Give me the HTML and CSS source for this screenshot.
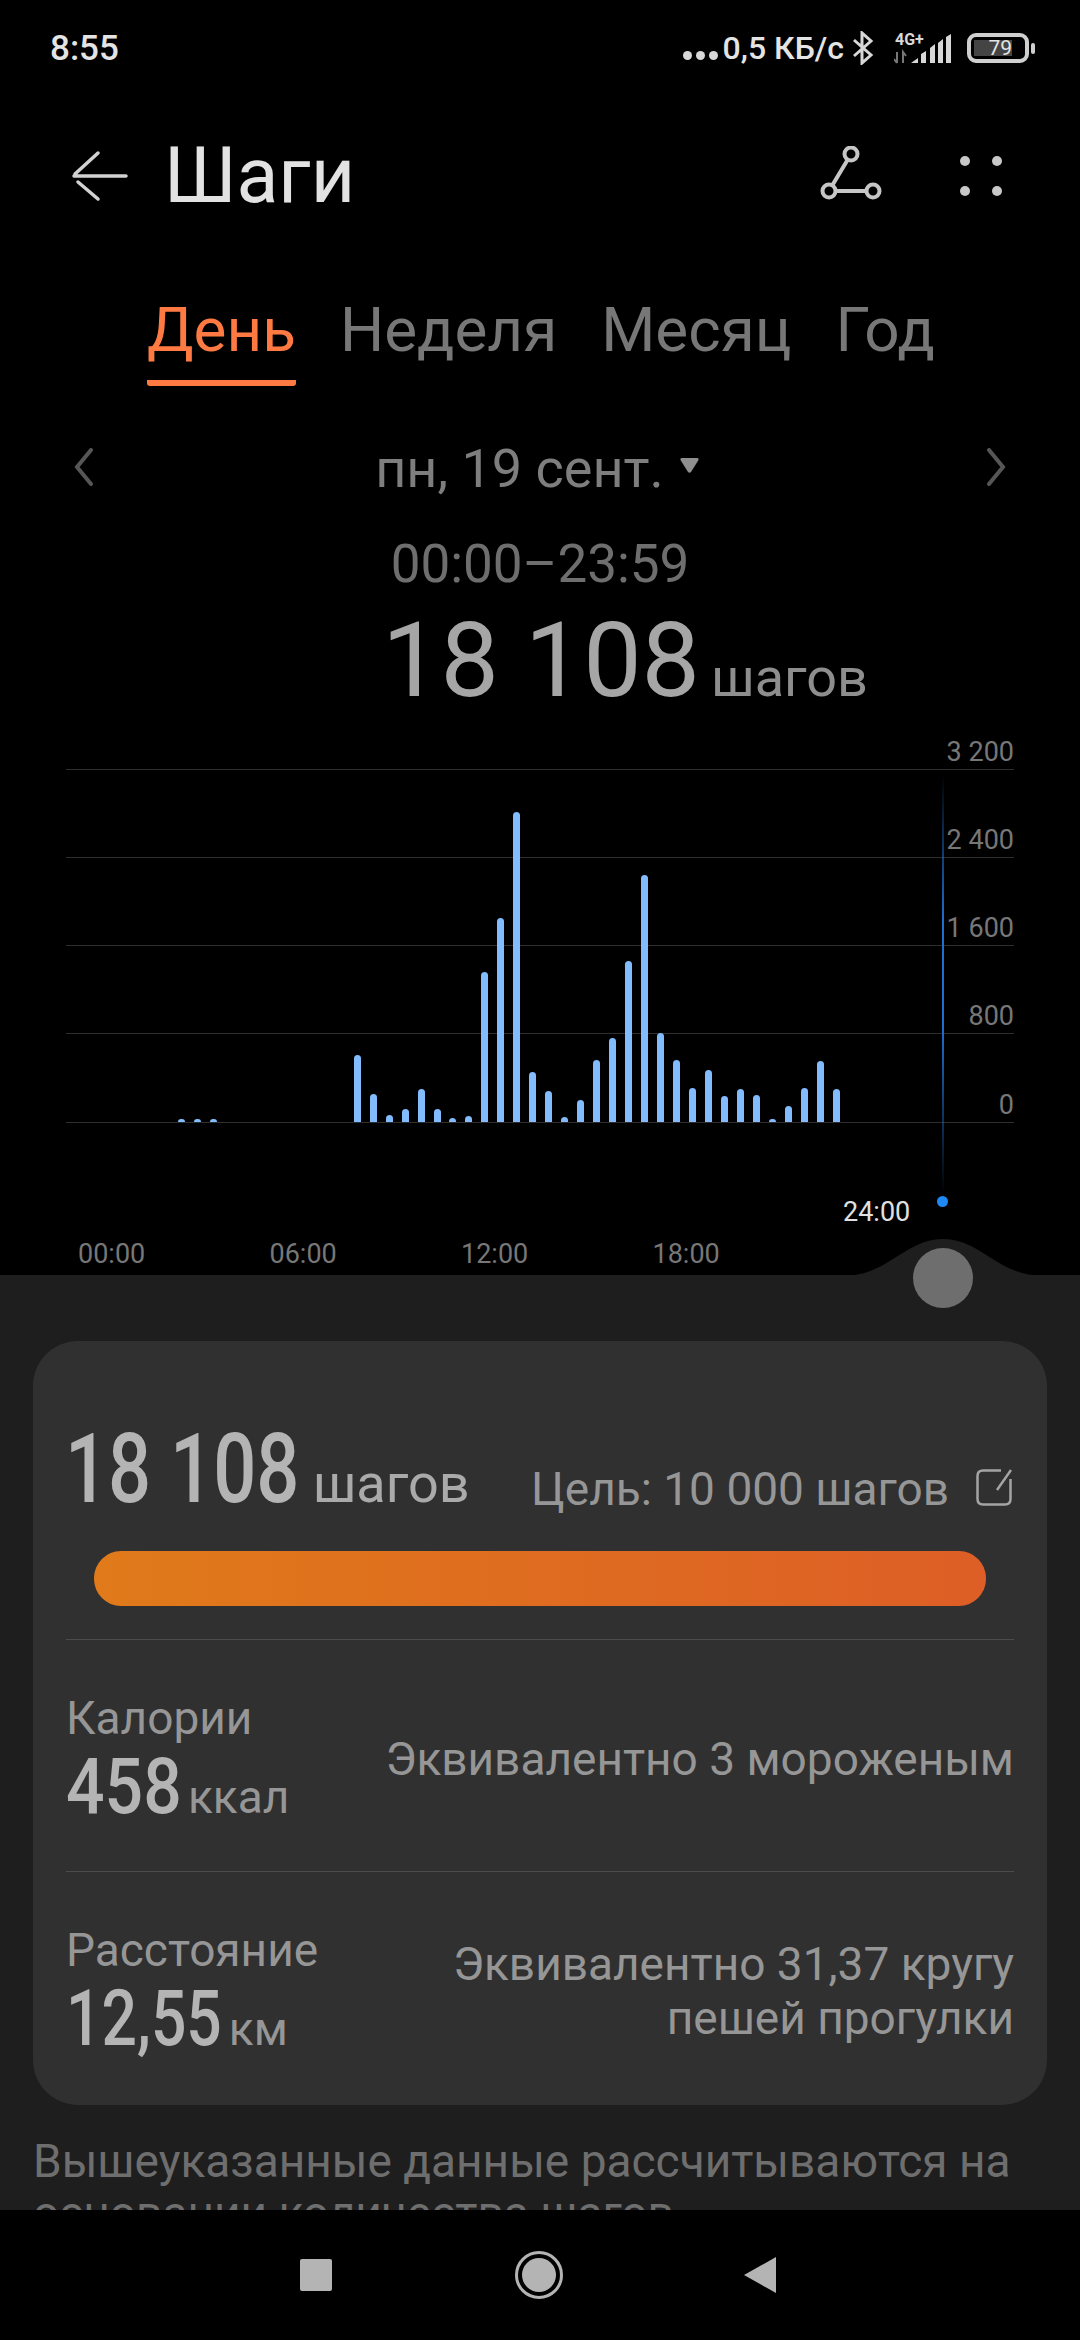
FILE: index.html
```html
<!DOCTYPE html>
<html lang="ru">
<head>
    <meta charset="UTF-8">
    <meta name="viewport" content="width=device-width, initial-scale=1.0">
    <title>Шаги</title>
    <link rel="stylesheet" href="styles.css">
</head>
<body>
    <div class="screen">
        <div class="top">
            <div class="status-bar">
                <span class="clock">8:55</span>
                <div class="status-right">
                    <span class="status-dots"><i></i><i></i><i></i></span>
                    <span class="net-speed">0,5 КБ/с</span>
                    <svg class="bt-icon" width="22" height="34" viewBox="0 0 22 34"><path d="M2 9 L19 24 L10 32 V2 L19 10 L2 25" fill="none" stroke="#d8d8d8" stroke-width="3"/></svg>
                    <div class="signal">
                        <span class="signal-label">4G+</span>
                        <svg width="58" height="31" viewBox="0 0 58 31"><path d="M3 19v11M0 26l3 4M9 30V19l3 4" stroke="#777" stroke-width="2" fill="none"/><path d="M17 30l7-5v5zM27 30V21l5-3V30zM36 30V15l5-4V30zM44 30V10l5-4V30zM52 30V4l5-3V30z" fill="#d8d8d8"/></svg>
                    </div>
                    <div class="battery"><div class="battery-level">79</div></div>
                    <div class="battery-nub"></div>
                </div>
            </div>

            <div class="app-header">
                <svg class="back-icon" width="58" height="52" viewBox="0 0 58 52"><path d="M28 3 L5 24 M4 26 H56 M8 32 L28 49" fill="none" stroke="#d2d2d2" stroke-width="3.5" stroke-linecap="round"/></svg>
                <h1 class="title">Шаги</h1>
                <svg class="share-icon" width="66" height="60" viewBox="0 0 66 60"><g fill="none" stroke="#c6c6c6" stroke-width="4"><circle cx="33" cy="8" r="6.5"/><circle cx="11" cy="45" r="6.5"/><circle cx="55" cy="45" r="6.5"/><path d="M29.500 14 L14.500 39 M17.500 45 H48.500"/></g></svg>
                <div class="more-icon"><i></i><i></i><i></i><i></i></div>
            </div>

            <div class="tabs">
                <div class="tab active">День</div>
                <div class="tab">Неделя</div>
                <div class="tab">Месяц</div>
                <div class="tab">Год</div>
            </div>

            <div class="date-row">
                <svg class="date-arrow" width="20" height="38" viewBox="0 0 20 38"><path d="M17 2 L3 19 L17 36" fill="none" stroke="#565656" stroke-width="4" stroke-linecap="round"/></svg>
                <div class="date-label">пн, 19 сент.<svg class="date-caret" width="19" height="15" viewBox="0 0 19 15"><path d="M2 0 H17 Q19 0 18.500 2 L11 14 Q9.500 15.500 8 14 L.500 2 Q0 0 2 0 Z" fill="#8f8f8f"/></svg></div>
                <svg class="date-arrow" width="20" height="38" viewBox="0 0 20 38"><path d="M3 2 L17 19 L3 36" fill="none" stroke="#565656" stroke-width="4" stroke-linecap="round"/></svg>
            </div>

            <div class="range">00:00–23:59</div>
            <div class="total"><span class="total-num">18 108</span><span class="total-unit">шагов</span></div>

            <div class="chart">
                <div class="grid-row"><span>3 200</span></div>
                <div class="grid-row"><span>2 400</span></div>
                <div class="grid-row"><span>1 600</span></div>
                <div class="grid-row"><span>800</span></div>
                <div class="grid-row"><span>0</span></div>

                <div class="bars">
                    <div class="bar" style="height: 3px"></div>
                    <div class="bar" style="height: 3px"></div>
                    <div class="bar" style="height: 3px"></div>
                    <div class="bar" style="height: 0"></div>
                    <div class="bar" style="height: 0"></div>
                    <div class="bar" style="height: 0"></div>
                    <div class="bar" style="height: 0"></div>
                    <div class="bar" style="height: 0"></div>
                    <div class="bar" style="height: 0"></div>
                    <div class="bar" style="height: 0"></div>
                    <div class="bar" style="height: 0"></div>
                    <div class="bar" style="height: 67px"></div>
                    <div class="bar" style="height: 28px"></div>
                    <div class="bar" style="height: 7px"></div>
                    <div class="bar" style="height: 13px"></div>
                    <div class="bar" style="height: 33px"></div>
                    <div class="bar" style="height: 13px"></div>
                    <div class="bar" style="height: 4px"></div>
                    <div class="bar" style="height: 6px"></div>
                    <div class="bar" style="height: 150px"></div>
                    <div class="bar" style="height: 204px"></div>
                    <div class="bar" style="height: 310px"></div>
                    <div class="bar" style="height: 50px"></div>
                    <div class="bar" style="height: 31px"></div>
                    <div class="bar" style="height: 5px"></div>
                    <div class="bar" style="height: 22px"></div>
                    <div class="bar" style="height: 62px"></div>
                    <div class="bar" style="height: 84px"></div>
                    <div class="bar" style="height: 161px"></div>
                    <div class="bar" style="height: 247px"></div>
                    <div class="bar" style="height: 89px"></div>
                    <div class="bar" style="height: 62px"></div>
                    <div class="bar" style="height: 34px"></div>
                    <div class="bar" style="height: 52px"></div>
                    <div class="bar" style="height: 26px"></div>
                    <div class="bar" style="height: 33px"></div>
                    <div class="bar" style="height: 27px"></div>
                    <div class="bar" style="height: 3px"></div>
                    <div class="bar" style="height: 16px"></div>
                    <div class="bar" style="height: 34px"></div>
                    <div class="bar" style="height: 61px"></div>
                    <div class="bar" style="height: 33px"></div>
                </div>

                <div class="cursor-line"></div>
                <div class="cursor-dot"></div>
                <div class="cursor-time">24:00</div>
            </div>

            <div class="time-axis">
                <span>00:00</span>
                <span>06:00</span>
                <span>12:00</span>
                <span>18:00</span>
            </div>
        </div>

        <div class="sheet">
            <svg class="sheet-bump" width="200" height="38" viewBox="0 0 200 38"><path d="M0 38 C45 38 62 1 100 1 C138 1 155 38 200 38 Z" fill="#1e1e1e"/></svg>
            <div class="knob"></div>

            <div class="card">
                <div class="goal-row">
                    <div><span class="big-num">18 108</span><span class="big-unit">шагов</span></div>
                    <div class="goal">
                        <span>Цель: 10 000 шагов</span>
                        <svg class="goal-edit" width="36" height="37" viewBox="0 0 36 37"><path d="M25 1.500 H7 Q1.500 1.500 1.500 7 V30 Q1.500 35.500 7 35.500 H29 Q34.500 35.500 34.500 30 V10" fill="none" stroke="#a4a4a4" stroke-width="2.500"/><path d="M35 1 L21 21" fill="none" stroke="#a4a4a4" stroke-width="2.500"/></svg>
                    </div>
                </div>
                <div class="progress"></div>

                <div class="stat">
                    <div>
                        <div class="stat-label">Калории</div>
                        <div class="stat-value"><span class="stat-num">458</span><span class="stat-unit">ккал</span></div>
                    </div>
                    <div class="stat-note">Эквивалентно 3 мороженым</div>
                </div>

                <div class="stat">
                    <div>
                        <div class="stat-label">Расстояние</div>
                        <div class="stat-value"><span class="stat-num stat-num-long">12,55</span><span class="stat-unit">км</span></div>
                    </div>
                    <div class="stat-note">Эквивалентно 31,37 кругу<br>пешей прогулки</div>
                </div>
            </div>

            <p class="footnote">Вышеуказанные данные рассчитываются на основании количества шагов.</p>
        </div>

        <div class="nav-bar">
            <div class="nav-square"></div>
            <div class="nav-home"><div class="nav-home-inner"></div></div>
            <svg width="32" height="36" viewBox="0 0 32 36"><path d="M32 0 V36 L0 18 Z" fill="#b4b4b4"/></svg>
        </div>
    </div>
</body>
</html>
```

FILE: styles.css
```css
* {
    box-sizing: border-box;
}

body {
    margin: 0;
    font-family: Roboto, "Noto Sans", sans-serif;
    background-color: #000;
}

.screen {
    width: 1080px;
    height: 2340px;
    display: flex;
    flex-direction: column;
    overflow: hidden;
    background-color: #000;
}

.top {
    height: 1275px;
    flex-shrink: 0;
}

/* status bar */
.status-bar {
    height: 96px;
    padding: 0 45px 0 50px;
    display: flex;
    align-items: center;
    justify-content: space-between;
    color: #e4e4e4;
}

.clock {
    font-size: 35px;
    font-weight: 500;
}

.status-right {
    display: flex;
    align-items: center;
}

.status-dots {
    display: flex;
    gap: 4px;
    margin: 14px 5px 0 0;
}

.status-dots i {
    width: 9px;
    height: 9px;
    border-radius: 50%;
    background-color: #d8d8d8;
}

.net-speed {
    font-size: 32px;
    font-weight: 500;
}

.bt-icon {
    margin-left: 8px;
}

.signal {
    position: relative;
    width: 58px;
    margin-left: 20px;
    display: flex;
}

.signal-label {
    position: absolute;
    left: 1px;
    top: -3px;
    font-size: 16px;
    font-weight: 700;
    color: #d8d8d8;
}

.battery {
    width: 62px;
    height: 30px;
    margin-left: 15px;
    padding: 3px 13px 3px 3px;
    border: 4px solid #cfcfcf;
    border-radius: 9px;
}

.battery-level {
    height: 100%;
    background-color: #444;
    color: #e4e4e4;
    font-size: 21px;
    line-height: 16px;
    text-align: right;
}

.battery-nub {
    width: 4px;
    height: 11px;
    margin-left: 2px;
    border-radius: 2px;
    background-color: #cfcfcf;
}

/* header */
.app-header {
    height: 160px;
    padding-left: 70px;
    display: flex;
    align-items: center;
}

.title {
    margin: 0 0 0 36px;
    font-size: 77px;
    font-weight: 400;
    color: #e2e2e2;
}

.share-icon {
    margin-left: auto;
}

.more-icon {
    width: 42px;
    height: 40px;
    margin: 0 78px 0 76px;
    display: grid;
    grid-template-columns: 10px 10px;
    justify-content: space-between;
    align-content: space-between;
}

.more-icon i {
    width: 10px;
    height: 10px;
    border-radius: 50%;
    background-color: #c8c8c8;
}

/* tabs */
.tabs {
    height: 135px;
    padding: 39px 0 0 147px;
    display: flex;
    gap: 44px;
}

.tab {
    height: 91px;
    font-size: 62px;
    line-height: 70px;
    color: #777;
}

.tab.active {
    color: #ff7a42;
    border-bottom: 6px solid #ff7a42;
    border-radius: 0 0 3px 3px;
}

/* date */
.date-row {
    height: 60px;
    margin-top: 48px;
    padding: 0 74px;
    display: flex;
    align-items: center;
    justify-content: space-between;
}

.date-arrow {
    margin-top: -5px;
}

.date-label {
    margin-right: 6px;
    font-size: 54px;
    line-height: 60px;
    color: #7e7e7e;
    display: flex;
    align-items: center;
}

.date-caret {
    margin-left: 16px;
    margin-top: -8px;
}

.range {
    margin-top: 37px;
    font-size: 53px;
    line-height: 56px;
    color: #6e6e6e;
    text-align: center;
}

.total {
    margin-top: 15px;
    padding-left: 382px;
    display: flex;
    align-items: baseline;
    height: 108px;
    color: #a6a6a6;
}

.total-num {
    font-size: 104px;
    line-height: 108px;
}

.total-unit {
    margin-left: 11px;
    font-size: 54px;
    color: #8e8e8e;
}

/* chart */
.chart {
    position: relative;
    margin: 0 66px;
}

.grid-row {
    height: 88px;
    border-bottom: 1px solid #2e2e2e;
    display: flex;
    align-items: flex-end;
    justify-content: flex-end;
    font-size: 27px;
    line-height: 34px;
    color: #777;
}

.grid-row:first-child {
    height: 55px;
}

.grid-row:nth-child(5) {
    height: 89px;
}

.bars {
    position: absolute;
    left: 112px;
    bottom: 1px;
    display: flex;
    align-items: flex-end;
    gap: 8.97px;
}

.bar {
    width: 7px;
    background-color: #82bcff;
    border-radius: 4px 4px 0 0;
}

.cursor-line {
    position: absolute;
    left: 876px;
    top: 60px;
    width: 2px;
    height: 420px;
    background: linear-gradient(to bottom, transparent, #1f6fd0 35%, #1f6fd0 60%, transparent);
}

.cursor-dot {
    position: absolute;
    left: 871px;
    top: 481px;
    width: 11px;
    height: 11px;
    border-radius: 50%;
    background-color: #1e88f5;
}

.cursor-time {
    position: absolute;
    left: 777px;
    top: 480px;
    font-size: 27px;
    line-height: 34px;
    color: #e0e0e0;
}

.time-axis {
    margin-top: 114px;
    padding-left: 78px;
    display: flex;
    font-size: 27px;
    line-height: 34px;
    color: #777;
}

.time-axis span {
    width: 191.500px;
}

/* bottom sheet */
.sheet {
    position: relative;
    flex: 1;
    min-height: 0;
    padding: 66px 33px 0;
    background-color: #1e1e1e;
}

.sheet-bump {
    position: absolute;
    left: 843px;
    top: -37px;
}

.knob {
    position: absolute;
    left: 913px;
    top: -27px;
    width: 60px;
    height: 60px;
    border-radius: 50%;
    background-color: #6e6e6e;
}

.card {
    height: 764px;
    padding: 78px 33px 0;
    background-color: #303030;
    border-radius: 45px;
}

.goal-row {
    display: flex;
    align-items: baseline;
    justify-content: space-between;
    height: 100px;
}

/* condensed digits: no narrow face is installed, so squeeze Roboto */
.big-num,
.stat-num {
    display: inline-block;
    font-weight: 500;
    color: #b4b4b4;
    transform-origin: left center;
}

.big-num {
    margin-left: -1px;
    margin-right: -63px;
    font-size: 96px;
    line-height: 100px;
    transform: scaleX(.79);
}

.big-unit {
    margin-left: 14px;
    font-size: 54px;
    color: #aaa;
}

.goal {
    align-self: flex-end;
    margin: 0 2px 3px 0;
    font-size: 46px;
    line-height: 54px;
    color: #969696;
    display: flex;
    align-items: center;
    gap: 27px;
}

.goal-edit {
    margin-top: -4px;
}

.progress {
    height: 55px;
    margin: 32px 28px 33px;
    border-radius: 27px;
    background: linear-gradient(to right, #e07a1a, #dd5e26);
}

.stat {
    height: 232px;
    padding-top: 6px;
    border-top: 1px solid #4c4c4c;
    display: flex;
    justify-content: space-between;
    align-items: center;
}

.stat-label {
    font-size: 46px;
    line-height: 56px;
    color: #969696;
}

.stat-value {
    height: 82px;
    line-height: 82px;
}

.stat-num {
    margin-right: -21px;
    font-size: 78px;
    transform: scaleX(.87);
}

.stat-num-long {
    margin-right: -42px;
    transform: scaleX(.8);
}

.stat-unit {
    margin-left: 10px;
    font-size: 46px;
    color: #969696;
}

.stat-note {
    font-size: 46px;
    line-height: 54px;
    color: #969696;
    text-align: right;
}

.footnote {
    margin: 30px 0 0;
    font-size: 46px;
    line-height: 52px;
    color: #6e6e6e;
}

.nav-bar {
    position: relative;
    z-index: 1;
    height: 130px;
    flex-shrink: 0;
    padding: 0 304px 0 300px;
    display: flex;
    align-items: center;
    justify-content: space-between;
    background-color: #000;
}

.nav-square {
    width: 32px;
    height: 32px;
    border-radius: 2px;
    background-color: #b4b4b4;
}

.nav-home {
    width: 48px;
    height: 48px;
    margin-left: 2px;
    padding: 4px;
    border: 3px solid #b4b4b4;
    border-radius: 50%;
}

.nav-home-inner {
    height: 100%;
    border-radius: 50%;
    background-color: #b4b4b4;
}
```
